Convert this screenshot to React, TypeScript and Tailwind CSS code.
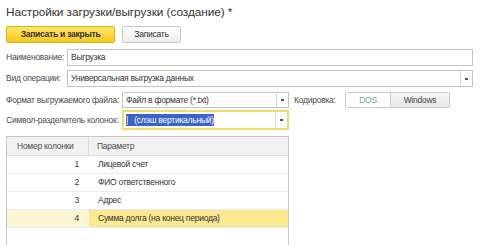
import React from "react";

const rows = [
  { n: 1, p: "Лицевой счет" },
  { n: 2, p: "ФИО ответственного" },
  { n: 3, p: "Адрес" },
  { n: 4, p: "Сумма долга (на конец периода)" },
];

function DropBtn() {
  return (
    <div className="flex w-[12px] items-center justify-center border-l border-[#d6d6d6]">
      <div className="h-[2px] w-[3px] bg-[#555]" />
    </div>
  );
}

export default function App() {
  return (
    <div
      className="h-[245px] w-[480px] overflow-hidden bg-white pl-[6px] text-[8.5px] leading-[11px] tracking-[-0.25px] text-[#4d4d4d]"
      style={{ fontFamily: '"Liberation Sans", Arial, sans-serif' }}
    >
      {/* Title */}
      <div className="pt-[5px] text-[11.8px] leading-[15px] tracking-[-0.05px] text-[#333]">
        Настройки загрузки/выгрузки (создание) *
      </div>

      {/* Buttons */}
      <div className="mt-[6px] flex gap-[7px]">
        <div className="flex h-[17px] w-[109px] items-center justify-center rounded-[2px] border border-[#d9b414] bg-gradient-to-b from-[#ffe866] to-[#f5c813] font-bold text-[#333]">
          Записать и закрыть
        </div>
        <div className="flex h-[17px] w-[59px] items-center justify-center rounded-[2px] border border-[#c8c8c8] bg-gradient-to-b from-white to-[#ececec] text-[#333]">
          Записать
        </div>
      </div>

      {/* Наименование */}
      <div className="mt-[6px] flex w-[467px] items-center">
        <div className="w-[61px] whitespace-nowrap">Наименование:</div>
        <div className="flex h-[17px] flex-1 items-center border border-[#c4c4c4] px-[3px] text-[#333]">
          Выгрузка
        </div>
      </div>

      {/* Вид операции */}
      <div className="mt-[4px] flex w-[467px] items-center">
        <div className="w-[61px] whitespace-nowrap">Вид операции:</div>
        <div className="flex h-[17px] flex-1 border border-[#c4c4c4] text-[#333]">
          <div className="flex flex-1 items-center px-[3px]">Универсальная выгрузка данных</div>
          <DropBtn />
        </div>
      </div>

      {/* Формат */}
      <div className="mt-[5px] flex items-center">
        <div className="w-[116px] whitespace-nowrap">Формат выгружаемого файла:</div>
        <div className="flex h-[16px] w-[167px] border border-[#c4c4c4] text-[#333]">
          <div className="flex flex-1 items-center px-[3px]">Файл в формате (*.txt)</div>
          <DropBtn />
        </div>
        <div className="ml-[5px] w-[51px] whitespace-nowrap">Кодировка:</div>
        <div className="flex h-[16px] w-[105px] rounded-[2px] border border-[#c8c8c8]">
          <div className="flex w-[44px] items-center justify-center bg-white text-[#5fae8e]">DOS</div>
          <div className="flex flex-1 items-center justify-center border-l border-[#d0d0d0] bg-gradient-to-b from-[#f7f7f7] to-[#e6e6e6] text-[#444]">
            Windows
          </div>
        </div>
      </div>

      {/* Символ-разделитель */}
      <div className="mt-[2px] flex items-center">
        <div className="w-[116px] whitespace-nowrap">Символ-разделитель колонок:</div>
        <div className="flex h-[20px] w-[167px] border-2 border-[#f3dc6c] text-[#333]">
          <div className="flex flex-1 items-center pl-[2px]">
            <span className="bg-[#3c63c9] leading-[12px] text-white">
              |&nbsp;&nbsp;&nbsp;(слэш вертикальный)
            </span>
          </div>
          <DropBtn />
        </div>
      </div>

      {/* Table */}
      <div className="mt-[6px] h-[120px] w-[283px] border-x border-t border-[#c8c8c8]">
        <div className="flex h-[19px] border-b border-[#dcdcdc] bg-[#f2f2f2] text-[#4d4d4d]">
          <div className="flex w-[82px] items-center border-r border-[#dcdcdc] pl-[10px]">Номер колонки</div>
          <div className="flex flex-1 items-center pl-[8px]">Параметр</div>
        </div>
        {rows.map((r) => {
          const sel = r.n === 4;
          return (
            <div key={r.n} className="flex h-[18px] border-b border-[#ececec] text-[#333]">
              <div
                className={`flex w-[82px] items-center justify-end pr-[10px] ${sel ? "bg-[#fdf6d4]" : ""}`}
              >
                {r.n}
              </div>
              <div className={`flex flex-1 items-center pl-[9px] ${sel ? "bg-[#fbe992]" : ""}`}>
                {r.p}
              </div>
            </div>
          );
        })}
      </div>
    </div>
  );
}
